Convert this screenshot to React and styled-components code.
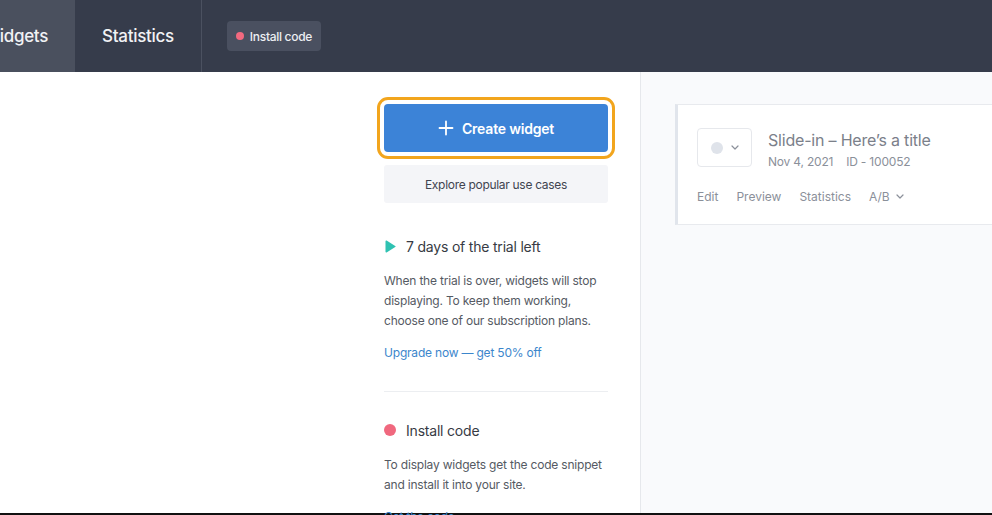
import React from "react";
import styled, { createGlobalStyle } from "styled-components";

const GlobalStyle = createGlobalStyle`
    html, body {
        margin: 0;
        padding: 0;
        height: 100%;
        overflow: hidden;
    }
    body {
        font-family: Inter, "Noto Sans", sans-serif;
        background: #ffffff;
    }
    #root {
        height: 100%;
    }
`;

const Page = styled.div`
    height: 100%;
    display: flex;
    flex-direction: column;
    border-bottom: 2px solid #111;
    box-sizing: border-box;
`;

const Header = styled.header`
    height: 72px;
    flex-shrink: 0;
    background: #363c4b;
    display: flex;
    align-items: stretch;
    margin-left: -44px;
`;

const Tab = styled.div`
    display: flex;
    align-items: center;
    padding: 0 27px;
    font-size: 17px;
    font-weight: 500;
    color: #f1f2f5;
    letter-spacing: -0.3px;
    background: ${(p) => (p.$active ? "#4a505e" : "transparent")};
    border-right: ${(p) => (p.$divider ? "1px solid #4b5160" : "none")};
`;

const BadgeWrap = styled.div`
    display: flex;
    align-items: center;
    padding-left: 25px;
`;

const Badge = styled.div`
    display: flex;
    align-items: center;
    gap: 6px;
    height: 30px;
    padding: 0 9px;
    border-radius: 4px;
    background: #4a5060;
    color: #eceef2;
    font-size: 12px;
    font-weight: 500;
    letter-spacing: -0.3px;
`;

const Dot = styled.span`
    display: inline-block;
    width: ${(p) => p.$size}px;
    height: ${(p) => p.$size}px;
    border-radius: 50%;
    background: ${(p) => p.$color};
    flex-shrink: 0;
`;

const Main = styled.main`
    flex: 1;
    display: flex;
    min-height: 0;
`;

const Sidebar = styled.aside`
    width: 641px;
    flex-shrink: 0;
    box-sizing: border-box;
    padding: 32px 32px 0 0;
    border-right: 1px solid #e6e8ec;
    display: flex;
    justify-content: flex-end;
`;

const SideColumn = styled.div`
    width: 224px;
    display: flex;
    flex-direction: column;

    & > * {
        flex-shrink: 0;
    }
`;

const CreateButton = styled.button`
    height: 48px;
    border: none;
    border-radius: 4px;
    background: #3c83d7;
    color: #ffffff;
    font-family: inherit;
    font-size: 14px;
    font-weight: 600;
    letter-spacing: -0.2px;
    display: flex;
    align-items: center;
    justify-content: center;
    gap: 8px;
    outline: 3px solid #f2a51d;
    outline-offset: 4px;
    padding: 0;
`;

const ExploreButton = styled.button`
    margin-top: 13px;
    height: 38px;
    border: none;
    border-radius: 3px;
    background: #f4f5f8;
    color: #3f4450;
    font-family: inherit;
    font-size: 12px;
    letter-spacing: -0.3px;
    padding: 0;
`;

const Section = styled.section`
    padding: ${(p) => p.$pad};
    border-bottom: ${(p) => (p.$divider ? "1px solid #eceef1" : "none")};
`;

const SectionTitle = styled.div`
    display: flex;
    align-items: center;
    gap: 10px;
    font-size: 14px;
    color: #373b44;
    letter-spacing: -0.2px;
    height: 20px;
`;

const Text = styled.p`
    margin: 15px 0 0;
    font-size: 12px;
    line-height: 20px;
    color: #555a63;
    letter-spacing: -0.2px;
`;

const Link = styled.a`
    display: block;
    margin-top: ${(p) => p.$mt}px;
    font-size: 12px;
    line-height: 20px;
    color: #3c86cc;
    text-decoration: none;
    letter-spacing: -0.2px;
`;

const Content = styled.div`
    flex: 1;
    background: #f9fafc;
    padding: 32px 0 0 34px;
    overflow: hidden;
`;

const Card = styled.div`
    width: 340px;
    height: 121px;
    box-sizing: border-box;
    background: #ffffff;
    border: 1px solid #e8eaee;
    border-left: 3px solid #e1e5ec;
    padding: 23px 0 0 19px;
    display: flex;
    flex-direction: column;
`;

const CardTop = styled.div`
    display: flex;
    align-items: flex-start;
    gap: 16px;
`;

const StatusSelect = styled.div`
    width: 55px;
    height: 39px;
    box-sizing: border-box;
    border: 1px solid #e6e8ec;
    border-radius: 4px;
    display: flex;
    align-items: center;
    justify-content: center;
    gap: 8px;
`;

const CardInfo = styled.div`
    display: flex;
    flex-direction: column;
    padding-top: 1px;
`;

const CardTitle = styled.div`
    font-size: 16px;
    color: #7b808a;
    letter-spacing: -0.2px;
    line-height: 22px;
`;

const Meta = styled.div`
    display: flex;
    gap: 13px;
    margin-top: 2px;
    font-size: 12px;
    color: #8b909a;
    line-height: 18px;
    letter-spacing: -0.2px;
`;

const Actions = styled.div`
    display: flex;
    align-items: center;
    gap: 18px;
    margin-top: 18px;
    font-size: 12px;
    color: #8b909a;
`;

const Action = styled.span`
    display: flex;
    align-items: center;
    gap: 6px;
`;

const Chevron = ({ color = "#8b909a" }) => (
    <svg width="8" height="5" viewBox="0 0 8 5" fill="none">
        <path d="M1 1l3 3 3-3" stroke={color} strokeWidth="1.2" strokeLinecap="round" strokeLinejoin="round" />
    </svg>
);

const PlusIcon = () => (
    <svg width="16" height="16" viewBox="0 0 16 16" fill="none">
        <path d="M8 1.5v13M1.5 8h13" stroke="#fff" strokeWidth="1.8" strokeLinecap="round" />
    </svg>
);

const PlayIcon = () => (
    <svg width="12" height="13" viewBox="0 0 12 13">
        <path d="M1.5 1.2c0-.6.6-.9 1.1-.6l8.6 5.3c.5.3.5.9 0 1.2l-8.6 5.3c-.5.3-1.1 0-1.1-.6z" fill="#2fc2b2" />
    </svg>
);

const App = () => {
    return (
        <>
            <GlobalStyle />
            <Page>
                <Header>
                    <Tab $active>Widgets</Tab>
                    <Tab $divider>Statistics</Tab>
                    <BadgeWrap>
                        <Badge>
                            <Dot $size={8} $color="#f2697f" />
                            Install code
                        </Badge>
                    </BadgeWrap>
                </Header>
                <Main>
                    <Sidebar>
                        <SideColumn>
                            <CreateButton>
                                <PlusIcon />
                                Create widget
                            </CreateButton>
                            <ExploreButton>Explore popular use cases</ExploreButton>
                            <Section $pad="33px 0 28px" $divider>
                                <SectionTitle>
                                    <PlayIcon />
                                    7 days of the trial left
                                </SectionTitle>
                                <Text>
                                    When the trial is over, widgets will stop displaying. To keep them working,
                                    choose one of our subscription plans.
                                </Text>
                                <Link $mt={12}>Upgrade now — get 50% off</Link>
                            </Section>
                            <Section $pad="28px 0 0">
                                <SectionTitle>
                                    <Dot $size={12} $color="#f0687e" />
                                    Install code
                                </SectionTitle>
                                <Text>To display widgets get the code snippet and install it into your site.</Text>
                                <Link $mt={12}>Get the code</Link>
                            </Section>
                        </SideColumn>
                    </Sidebar>
                    <Content>
                        <Card>
                            <CardTop>
                                <StatusSelect>
                                    <Dot $size={12} $color="#dfe3ea" />
                                    <Chevron />
                                </StatusSelect>
                                <CardInfo>
                                    <CardTitle>Slide-in – Here’s a title</CardTitle>
                                    <Meta>
                                        <span>Nov 4, 2021</span>
                                        <span>ID - 100052</span>
                                    </Meta>
                                </CardInfo>
                            </CardTop>
                            <Actions>
                                <Action>Edit</Action>
                                <Action>Preview</Action>
                                <Action>Statistics</Action>
                                <Action>
                                    A/B <Chevron />
                                </Action>
                            </Actions>
                        </Card>
                    </Content>
                </Main>
            </Page>
        </>
    );
};

export default App;
